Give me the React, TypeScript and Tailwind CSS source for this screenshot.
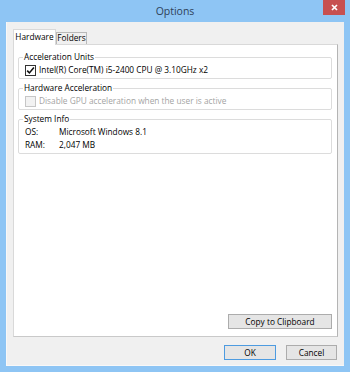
import React from "react";

const CheckBox = ({ checked, disabled }: { checked?: boolean; disabled?: boolean }) => (
  <span
    className={
      "flex items-center justify-center w-[11px] h-[11px] border " +
      (disabled ? "border-[#c6c6c6] bg-[#f2f2f2]" : "border-[#333333] bg-white")
    }
  >
    {checked && (
      <svg width="9" height="9" viewBox="0 0 9 9">
        <path d="M1.2 4.6 L3.4 6.9 L7.9 1.6" fill="none" stroke="#111111" strokeWidth="1.6" />
      </svg>
    )}
  </span>
);

const Group = ({ title, children }: { title: string; children: React.ReactNode }) => (
  <fieldset className="border border-[#dcdcdc] rounded-[2px] px-[6px] pb-[1px] mx-0">
    <legend className="ml-[-2px] px-[1px] leading-[12px]">{title}</legend>
    <div className="pt-[1px]">{children}</div>
  </fieldset>
);

const Row = ({ children }: { children: React.ReactNode }) => (
  <div className="flex items-center h-[13px] whitespace-nowrap">{children}</div>
);

export default function App() {
  return (
    <div className="w-[350px] h-[372px] bg-[#8ec5f4] flex flex-col font-['Open_Sans',sans-serif] text-[8.3px] text-black">
      {/* title bar */}
      <div className="h-[22px] flex items-start pl-[27px] pr-[5px]">
        <div className="flex-1 text-center text-[10.5px] leading-[23px] text-[#2f4259]">Options</div>
        <div className="w-[22px] h-[15px] bg-[#c75050] flex items-center justify-center">
          <svg width="7" height="7" viewBox="0 0 7 7">
            <path d="M1 1 L6 6 M6 1 L1 6" stroke="#ffffff" strokeWidth="1.7" />
          </svg>
        </div>
      </div>

      {/* client area */}
      <div className="flex-1 mx-[6px] mb-[6px] bg-[#f0f0f0] border-l border-b border-[#f8f8f8] flex flex-col pt-[7px] pl-[6px] pr-[6px]">
        <div className="flex items-end h-[15px] relative z-10">
          <div className="w-[43px] bg-white border border-b-0 border-[#d9d9d9] flex items-center justify-center mb-[-1px] h-[16px]">
            Hardware
          </div>
          <div className="w-[31px] h-[12px] bg-[#f0f0f0] border border-b-0 border-[#b9b9b9] flex items-center justify-center">
            Folders
          </div>
        </div>

        <div className="h-[293px] w-[325px] bg-white border border-[#d9d9d9] border-r-[#b4b4b4] border-b-[#c9c9c9] flex flex-col pl-[4px] pr-[5px] pt-[6px] pb-[7px]">
          <div className="flex flex-col gap-[3px]">
            <Group title="Acceleration Units">
              <Row>
                <CheckBox checked />
                <span className="ml-[3px]">Intel(R) Core(TM) i5-2400 CPU @ 3.10GHz x2</span>
              </Row>
            </Group>
            <Group title="Hardware Acceleration">
              <Row>
                <CheckBox disabled />
                <span className="ml-[3px] text-[#a3a3a3]">Disable GPU acceleration when the user is active</span>
              </Row>
            </Group>
            <Group title="System Info">
              <Row>
                <span className="w-[34px]">OS:</span>
                <span>Microsoft Windows 8.1</span>
              </Row>
              <Row>
                <span className="w-[34px]">RAM:</span>
                <span>2,047 MB</span>
              </Row>
            </Group>
          </div>

          <div className="mt-auto flex justify-end">
            <button className="w-[104px] h-[15px] bg-[#e5e5e5] border border-[#acacac] leading-[13px]">
              Copy to Clipboard
            </button>
          </div>
        </div>

        <div className="flex justify-end gap-[10px] mt-[8px] pr-[1px]">
          <button className="w-[52px] h-[15px] bg-[#e5e5e5] border border-[#4d9be0] leading-[13px]">
            OK
          </button>
          <button className="w-[51px] h-[15px] bg-[#e5e5e5] border border-[#acacac] leading-[13px]">
            Cancel
          </button>
        </div>
      </div>
    </div>
  );
}
